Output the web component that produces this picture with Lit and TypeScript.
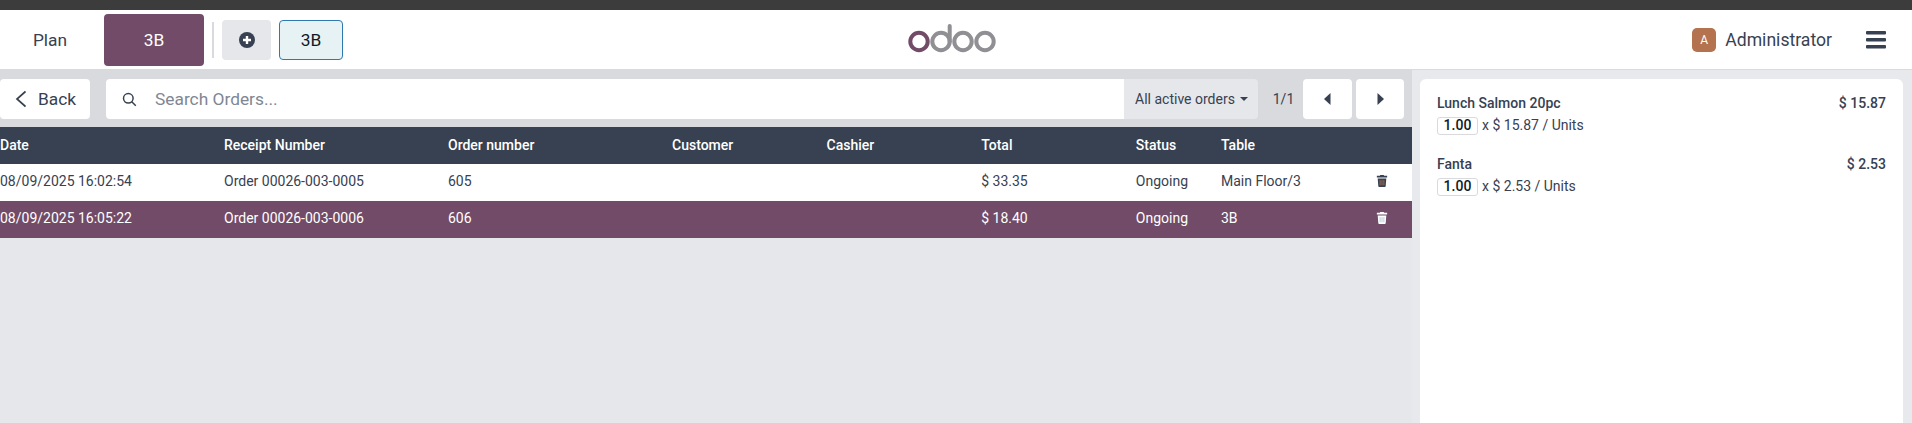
import { LitElement, html, css, svg } from "lit";
import { customElement } from "lit/decorators.js";

const trash = svg`<path fill="currentColor" d="M4.5 1 5 0h4l.5 1H13v2H1V1h3.5ZM2 4h10l-.7 9.2c0 .5-.5.8-1 .8H3.7c-.5 0-1-.3-1-.8L2 4Z"/><path stroke="var(--slot)" stroke-width="1" d="M4.8 6v6M7 6v6M9.2 6v6"/>`;

@customElement("app-root")
export class AppRoot extends LitElement {
  static styles = css`
    :host { display: block; width: 1912px; height: 423px; overflow: hidden; background: #e6e7eb; font-family: Roboto, "Liberation Sans", sans-serif; color: #374151; font-size: 14px; }
    .top { height: 10px; background: #3c3c3c; }
    .nav { height: 60px; background: #fff; display: flex; align-items: center; border-bottom: 1px solid #d8dadd; box-sizing: border-box; position: relative; }
    .plan { width: 100px; text-align: center; font-size: 17.33px; line-height: 24px; margin-right: 4px; }
    .cur { width: 100px; height: 52px; background: #714b67; color: #fff; border-radius: 4px; display: flex; align-items: center; justify-content: center; font-size: 17.33px; }
    .sep { width: 2px; height: 36px; background: #d8dadd; margin: 0 8px; }
    .add { width: 49px; height: 40px; background: #e6e7eb; border-radius: 4px; display: flex; align-items: center; justify-content: center; margin-right: 8px; }
    .chip { width: 64px; height: 40px; box-sizing: border-box; background: #e6f2f3; border: 1px solid #2e79b0; border-radius: 4px; display: flex; align-items: center; justify-content: center; font-size: 17.33px; color: #111827; }
    .logo { position: absolute; left: 906px; top: 12px; }
    .right { margin-left: auto; display: flex; align-items: center; }
    .avatar { width: 24px; height: 24px; border-radius: 5px; background: #b4724e; color: #fff; font-size: 12px; display: flex; align-items: center; justify-content: center; margin-right: 9px; }
    .admin { font-size: 17.6px; line-height: 24px; margin-right: 34px; }
    .burger { margin-right: 26px; display: block; }
    .main { display: flex; height: 353px; }
    .left { width: 1412px; flex: none; display: flex; flex-direction: column; }
    .bar { height: 57px; box-sizing: border-box; padding-top: 9px; background: #d8dadd; display: flex; align-items: flex-start; }
    .btn { background: #fff; height: 40px; border-radius: 4px; display: flex; align-items: center; justify-content: center; }
    .back { width: 90px; font-size: 17.33px; gap: 12px; margin-right: 16px; }
    .search { width: 1018px; justify-content: flex-start; padding-left: 16px; box-sizing: border-box; color: #7f8794; font-size: 17.33px; border-radius: 4px 0 0 4px; }
    .search svg { margin-right: 18px; color: #374151; }
    .filter { width: 134px; height: 40px; background: #e6e7eb; border-radius: 0 4px 4px 0; display: flex; align-items: center; justify-content: center; gap: 5px; font-size: 14px; padding-left: 1px; box-sizing: border-box; }
    .caret { border: 4px solid transparent; border-top-color: #374151; border-bottom: 0; }
    .count { width: 39px; padding-left: 6px; text-align: center; line-height: 40px; height: 40px; }
    .pg { width: 49px; }
    .pg + .pg { margin-left: 4px; width: 48px; }
    .row { display: grid; grid-template-columns: 224px 224px 224px 154.6px 154.6px 154.6px 85.2px 85px 105px; height: 37px; box-sizing: border-box; padding-bottom: 3px; align-items: center; background: #fff; }
    .row.head { background: #374151; color: #fff; font-weight: 500; padding-bottom: 2px; }
    .row.sel { background: #714b67; color: #fff; }
    .ico { --slot: #b4724e; grid-column: 9; margin-left: 70px; width: 12px; height: 14px; display: block; }
    .row.sel .ico { --slot: #a9c4d8; }
    .row .t { white-space: nowrap; }
    .side { width: 500px; flex: none; box-sizing: border-box; padding: 9px 9px 0 8px; background: #e7e9ed; }
    .card { background: #fff; height: 400px; border-radius: 6px 6px 0 0; padding: 14px 17px; box-sizing: border-box; }
    .line { margin-bottom: 17px; }
    .l1 { display: flex; justify-content: space-between; font-weight: 500; line-height: 20px; height: 20px; }
    .l2 { display: flex; align-items: center; height: 24px; line-height: 20px; gap: 4px; }
    .qty { width: 41px; height: 18px; margin-top: 2px; padding-bottom: 2px; box-sizing: border-box; border: 1px solid #d8dadd; border-radius: 3px; color: #111827; font-weight: 500; font-size: 14px; display: flex; align-items: center; justify-content: center; }
  `;

  private row(cells: string[], cls: string) {
    return html`<div class="row ${cls}">
      ${cells.map((c) => html`<div class="t">${c}</div>`)}
      ${cls === "head" ? "" : html`<svg class="ico" viewBox="0 0 14 14">${trash}</svg>`}
    </div>`;
  }

  private line(name: string, total: string, unit: string) {
    return html`<div class="line">
      <div class="l1"><span>${name}</span><span>${total}</span></div>
      <div class="l2"><span class="qty">1.00</span><span>x ${unit} / Units</span></div>
    </div>`;
  }

  render() {
    return html`
      <div class="top"></div>
      <div class="nav">
        <div class="plan">Plan</div>
        <div class="cur">3B</div>
        <div class="sep"></div>
        <div class="add"><svg width="16" height="16" viewBox="0 0 16 16"><circle cx="8" cy="8" r="8" fill="#374151"/><path d="M8 4v8M4 8h8" stroke="#fff" stroke-width="2.4"/></svg></div>
        <div class="chip">3B</div>
        <svg class="logo" width="92" height="40" viewBox="0 0 92 40" fill="none" stroke-width="4">
          <circle cx="13" cy="19.5" r="8.7" stroke="#714b67"/>
          <circle cx="35" cy="19.5" r="8.7" stroke="#8f8f94"/>
          <path d="M43.7 19.5V4" stroke="#8f8f94" stroke-linecap="round"/>
          <circle cx="57" cy="19.5" r="8.7" stroke="#8f8f94"/>
          <circle cx="79" cy="19.5" r="8.7" stroke="#8f8f94"/>
        </svg>
        <div class="right">
          <div class="avatar">A</div>
          <div class="admin">Administrator</div>
          <svg class="burger" width="20" height="18" viewBox="0 0 20 18" fill="#374151"><rect y="0" width="20" height="3.4" rx="1"/><rect y="7" width="20" height="3.4" rx="1"/><rect y="14" width="20" height="3.4" rx="1"/></svg>
        </div>
      </div>
      <div class="main">
        <div class="left">
          <div class="bar">
            <div class="btn back"><svg width="12" height="20" viewBox="0 0 12 20" fill="none" stroke="#374151" stroke-width="1.7"><path d="M11.5 2.5 3 10l8.5 7.5"/></svg><span>Back</span></div>
            <div class="btn search"><svg width="15" height="15" viewBox="0 0 15 15" fill="none" stroke="currentColor" stroke-width="1.5"><circle cx="6.3" cy="6.3" r="4.8"/><path d="m9.8 9.8 4 4"/></svg>Search Orders...</div>
            <div class="filter"><span>All active orders</span><span class="caret"></span></div>
            <div class="count">1/1</div>
            <div class="btn pg"><svg width="7" height="12" viewBox="0 0 7 12" fill="#374151"><path d="M6.5 0v12L0 6z"/></svg></div>
            <div class="btn pg"><svg width="7" height="12" viewBox="0 0 7 12" fill="#374151"><path d="M.5 0v12L7 6z"/></svg></div>
          </div>
          ${this.row(["Date", "Receipt Number", "Order number", "Customer", "Cashier", "Total", "Status", "Table"], "head")}
          ${this.row(["08/09/2025 16:02:54", "Order 00026-003-0005", "605", "", "", "$ 33.35", "Ongoing", "Main Floor/3"], "")}
          ${this.row(["08/09/2025 16:05:22", "Order 00026-003-0006", "606", "", "", "$ 18.40", "Ongoing", "3B"], "sel")}
        </div>
        <div class="side">
          <div class="card">
            ${this.line("Lunch Salmon 20pc", "$ 15.87", "$ 15.87")}
            ${this.line("Fanta", "$ 2.53", "$ 2.53")}
          </div>
        </div>
      </div>
    `;
  }
}
